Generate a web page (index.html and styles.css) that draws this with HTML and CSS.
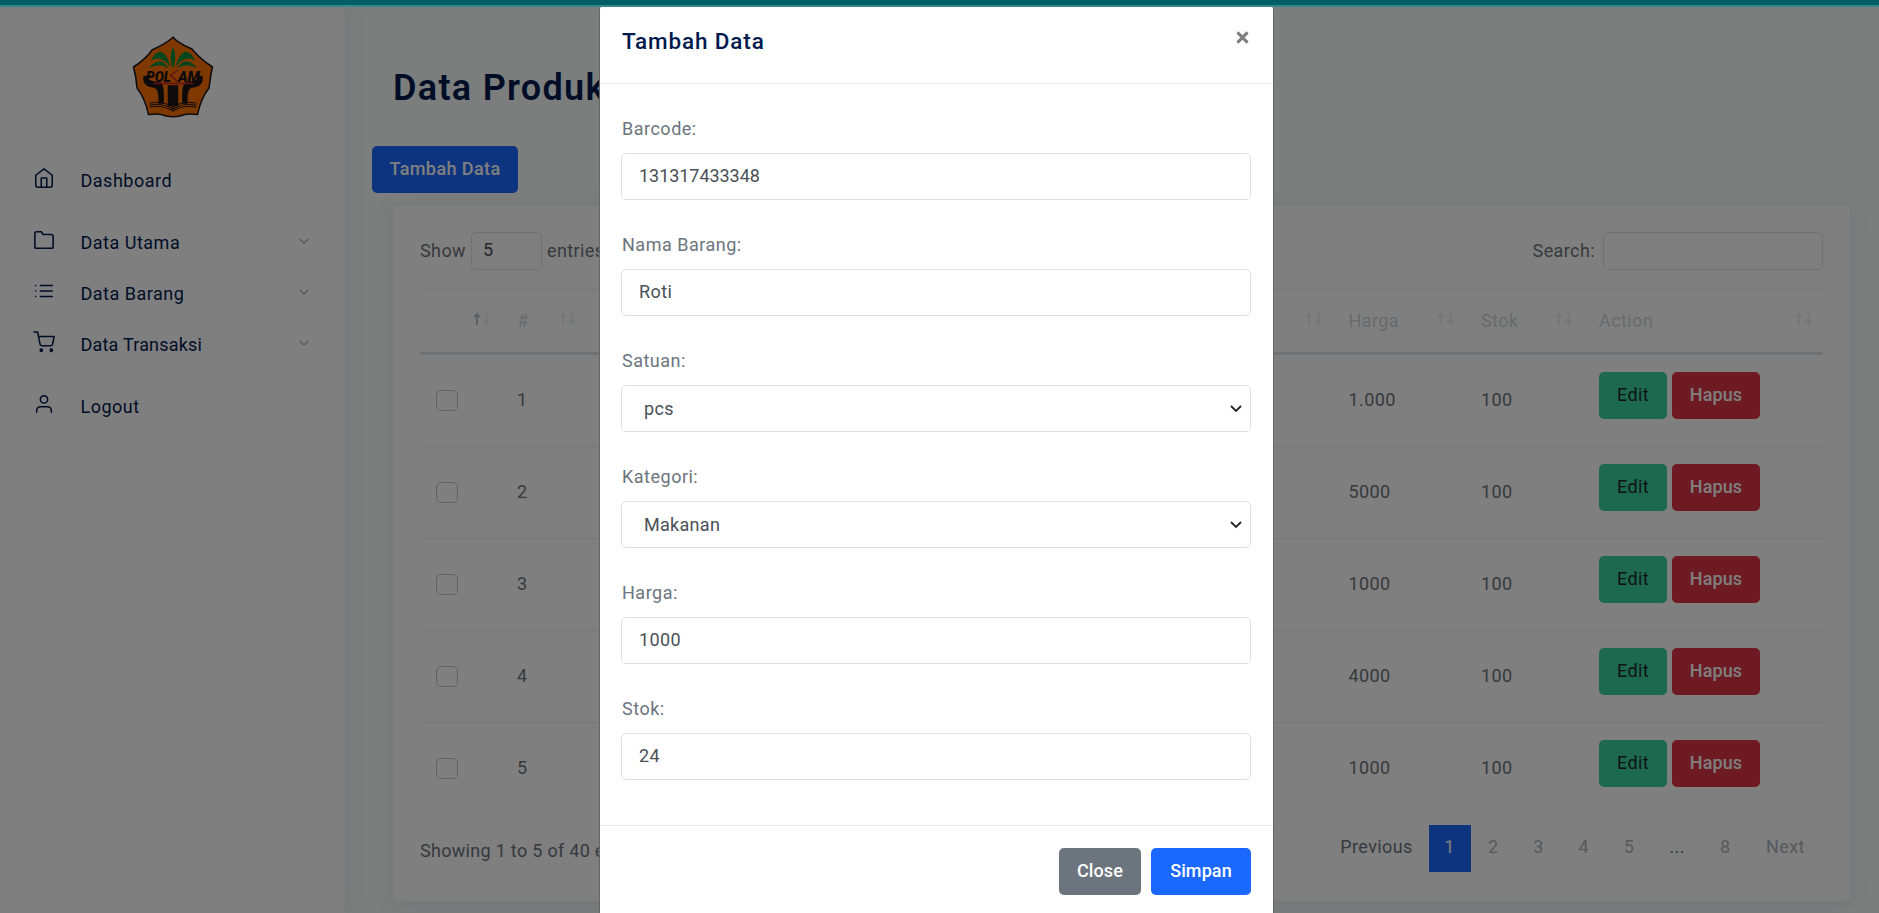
FILE: index.html
```
<!DOCTYPE html>
<html lang="id">
<head>
<meta charset="utf-8">
<title>Data Produk</title>
<link rel="stylesheet" href="styles.css">
</head>
<body>
<svg width="0" height="0" class="defs">
  <symbol id="sort" viewBox="0 0 18 14"><path class="up" d="M4 13V3"/><path class="up head" d="M4 0.500L8 5.200H0z"/><path class="down" d="M13.500 1V10"/><path class="down head" d="M13.500 13.200L17.500 8.500H9.500z"/></symbol>
  <symbol id="chev" viewBox="0 0 10 6"><path d="M.7 .7L5 5L9.300 .7"/></symbol>
</svg>
<div class="app">
  <aside class="sidebar">
    <div class="brand">
      <svg class="logo" viewBox="0 0 82 82">
        <path d="M41 1.200Q46 7 60 13Q68 23 80.500 31Q79 37 77 52Q69 62 65.500 78.500Q54 77 48 80Q41 81.500 34 80Q28 77 16.500 78.500Q13 62 5 52Q4 40 1.500 31Q14 23 20 14Q35 7 41 1.200Z" fill="#ff7200" stroke="#1c1616" stroke-width="1.500"/>
        <path d="M41 11Q45.500 20 41 33Q36.500 20 41 11ZM39 31Q33 14 27 16Q22 17 19 25Q28 18 39 31ZM43 31Q49 14 55 16Q60 17 63 25Q54 18 43 31ZM37 33Q29 18 17 32Q29 26 37 33ZM45 33Q53 18 65 32Q53 26 45 33Z" fill="#058c3b"/>
        <path d="M12 41Q11 50 22 51Q28 52 27 67H31Q32 49 28 47Q16 46 15 42L17 40ZM70 41Q71 50 60 51Q54 52 55 67H51Q50 49 54 47Q66 46 67 42L65 40ZM36.500 50H45.500V69H36.500Z" fill="#1c1418" stroke="#1c1418" stroke-width="1.500"/>
        <path d="M17.500 67Q32 65 41 71Q50 65 64.500 67M17.500 69Q32 67 41 73Q50 67 64.500 69M17.500 71Q32 69 41 75Q50 69 64.500 71" fill="none" stroke="#1c1418" stroke-width="1.200"/>
        <path d="M46 34L38.500 39.500L46 46M21 47.500H61" fill="none" stroke="#c4222b" stroke-width="1.500"/>
        <text class="logo-text" x="14" y="45.500" textLength="25" lengthAdjust="spacingAndGlyphs">POL</text>
        <text class="logo-text" x="46" y="45.500" textLength="22" lengthAdjust="spacingAndGlyphs">AM</text>
      </svg>
    </div>
    <nav>
      <div class="item"><svg class="ico" viewBox="0 0 24 24"><path d="M3 9l9-7 9 7v11a2 2 0 0 1-2 2H5a2 2 0 0 1-2-2z"/><path d="M9 22V12h6v10"/></svg><span>Dashboard</span></div>
      <div class="group">
        <div class="item"><svg class="ico" viewBox="0 0 24 24"><path d="M22 19a2 2 0 0 1-2 2H4a2 2 0 0 1-2-2V5a2 2 0 0 1 2-2h5l2 3h9a2 2 0 0 1 2 2z"/></svg><span>Data Utama</span><svg class="chev"><use href="#chev"/></svg></div>
        <div class="item"><svg class="ico" viewBox="0 0 24 24"><path d="M8 6h13M8 12h13M8 18h13M3 6h.01M3 12h.01M3 18h.01"/></svg><span>Data Barang</span><svg class="chev"><use href="#chev"/></svg></div>
        <div class="item tight"><svg class="ico" viewBox="0 0 24 24"><circle cx="9" cy="21" r="1.200"/><circle cx="20" cy="21" r="1.200"/><path d="M1 1h4l2.680 13.390a2 2 0 0 0 2 1.610h9.720a2 2 0 0 0 2-1.610L23 6H6"/></svg><span>Data Transaksi</span><svg class="chev"><use href="#chev"/></svg></div>
      </div>
      <div class="item"><svg class="ico" viewBox="0 0 24 24"><path d="M20 21v-2a4 4 0 0 0-4-4H8a4 4 0 0 0-4 4v2"/><circle cx="12" cy="7" r="4"/></svg><span>Logout</span></div>
    </nav>
  </aside>
  <main class="main">
    <h1>Data Produk</h1>
    <button class="btn primary add">Tambah Data</button>
    <section class="card">
      <div class="tools">
        <div class="len">Show <span class="box count">5</span> entries</div>
        <div class="find">Search: <span class="box search"></span></div>
      </div>
      <div class="row head">
        <div><svg class="sort asc"><use href="#sort"/></svg></div>
        <div>#<svg class="sort"><use href="#sort"/></svg></div>
        <div><svg class="sort"><use href="#sort"/></svg></div>
        <div>Harga<svg class="sort"><use href="#sort"/></svg></div>
        <div>Stok<svg class="sort"><use href="#sort"/></svg></div>
        <div>Action<svg class="sort"><use href="#sort"/></svg></div>
      </div>
      <div class="row"><div><i class="check"></i></div><div>1</div><div></div><div>1.000</div><div>100</div><div class="acts"><button class="btn success">Edit</button><button class="btn danger">Hapus</button></div></div>
      <div class="row"><div><i class="check"></i></div><div>2</div><div></div><div>5000</div><div>100</div><div class="acts"><button class="btn success">Edit</button><button class="btn danger">Hapus</button></div></div>
      <div class="row"><div><i class="check"></i></div><div>3</div><div></div><div>1000</div><div>100</div><div class="acts"><button class="btn success">Edit</button><button class="btn danger">Hapus</button></div></div>
      <div class="row"><div><i class="check"></i></div><div>4</div><div></div><div>4000</div><div>100</div><div class="acts"><button class="btn success">Edit</button><button class="btn danger">Hapus</button></div></div>
      <div class="row last"><div><i class="check"></i></div><div>5</div><div></div><div>1000</div><div>100</div><div class="acts"><button class="btn success">Edit</button><button class="btn danger">Hapus</button></div></div>
      <div class="foot">
        <div class="info">Showing 1 to 5 of 40 entries</div>
        <div class="pages"><span class="prev">Previous</span><span class="on">1</span><span>2</span><span>3</span><span>4</span><span>5</span><span class="dots">...</span><span>8</span><span class="next">Next</span></div>
      </div>
    </section>
  </main>
</div>
<div class="backdrop">
  <div class="strip"></div>
  <div class="modal">
    <header><h5>Tambah Data</h5><svg class="close" viewBox="0 0 12 12"><path d="M1.300 1.300L10.700 10.700M10.700 1.300L1.300 10.700"/></svg></header>
    <div class="form">
      <label>Barcode:</label><div class="field digits">131317433348</div>
      <label>Nama Barang:</label><div class="field">Roti</div>
      <label>Satuan:</label><div class="field select">pcs<svg viewBox="0 0 12 8"><path d="M1 1L6 6L11 1"/></svg></div>
      <label>Kategori:</label><div class="field select">Makanan<svg viewBox="0 0 12 8"><path d="M1 1L6 6L11 1"/></svg></div>
      <label>Harga:</label><div class="field">1000</div>
      <label>Stok:</label><div class="field">24</div>
    </div>
    <footer><button class="btn secondary">Close</button><button class="btn primary">Simpan</button></footer>
  </div>
</div>
</body>
</html>
```
FILE: styles.css
```
* { box-sizing: border-box; }
html, body { height: 100%; overflow: hidden; }
body { margin: 0; font: 18px/27px Roboto, "Open Sans", sans-serif; color: #6c757d; background: #f8fbfa; letter-spacing: .4px; }
.defs { position: absolute; }
.app { display: flex; height: 913px; }
.sidebar { width: 346px; height: 913px; flex: none; background: #fff; border-right: 1px solid #e9ecef; padding: 35.500px 0 0; box-shadow: 0 0 20px rgba(30,35,90,.06); }
.brand { display: flex; justify-content: center; height: 117px; }
.logo { width: 82px; height: 82px; }
.logo-text { font: italic 900 15px Roboto, sans-serif; fill: #1c1418; letter-spacing: 0; }
.group { margin: 11px 0; }
.item { display: flex; align-items: center; height: 51px; padding: 0 36px 0 32.500px; color: #001a4e; letter-spacing: .5px; }
.item.tight { letter-spacing: .2px; }
.item span { flex: 1; padding: 5px 0 0 26px; }
.ico { width: 22px; height: 22px; fill: none; stroke: #001a4e; stroke-width: 1.700; stroke-linecap: round; stroke-linejoin: round; }
.chev { width: 10px; height: 6px; fill: none; stroke: #adb5bd; stroke-width: 1.400; margin-top: 2px; }
.main { flex: 1; padding: 63px 28px 0 26px; }
h1 { margin: 0 0 33px 21px; font-size: 36px; line-height: 50px; font-weight: 600; color: #001a4e; letter-spacing: 1.300px; }
.btn { display: block; height: 47px; border: 0; border-radius: 5px; padding: 0 0 2px; font: 500 18px/45px Roboto, sans-serif; letter-spacing: .1px; color: #fff; text-align: center; }
.primary { background: #1b68ff; }
.secondary { background: #6c757d; }
.success { background: #3ad29f; color: #212529; width: 68px; font-weight: 400; letter-spacing: .4px; }
.danger { background: #dc3545; width: 88px; }
.add { width: 146px; letter-spacing: .4px; }
.card { margin: 11px 0 0 20px; height: 698px; background: #fff; border: 1px solid #eef0f3; border-radius: 5px; padding: 27px; box-shadow: 0 3px 20px rgba(30,35,90,.07); }
.tools { display: flex; justify-content: space-between; height: 57px; }
.len, .find { display: flex; height: 36px; align-items: center; }
.box { border: 1px solid #dee2e6; border-radius: 5px; height: 38px; line-height: 34px; margin-top: 2px; }
.len .count { width: 71px; margin: 2px 5px 0; padding-left: 11px; color: #495057; }
.find .search { width: 220px; margin-left: 8px; }
.row { display: grid; grid-template-columns: 81px 86px 745.500px 132.500px 118px 1fr; height: 91.900px; border-bottom: 1px solid #e9ecef; }
.row > div { padding: 31px 16px 0; }
.row.head { height: 66px; border-top: 1px solid #e9ecef; border-bottom: 3px solid #dee2e6; color: #ced4da; }
.row.head > div { display: flex; justify-content: space-between; padding: 17px 10px 0 16px; }
.row.last { border: 0; }
.sort { width: 18px; height: 14px; margin: 5px 0 0 auto; stroke-width: 2; color: #ebedee; }
.sort path, #sort path { stroke: currentColor; fill: none; }
#sort .head { fill: currentColor; stroke: none; }
#sort .up { color: var(--up, #ebedee); }
.asc { --up: #b9bdc1; }
.check { display: block; width: 22px; height: 21px; margin-top: 4px; border: 1px solid #bfc5cb; border-radius: 5px; }
.row > .acts { display: flex; gap: 5px; padding-top: 17px; }
.foot { display: flex; justify-content: space-between; padding-top: 10.500px; }
.info { padding-top: 12px; white-space: nowrap; letter-spacing: .3px; }
.pages { display: flex; color: #adb5bd; }
.pages span { width: 45.300px; height: 47px; line-height: 44px; text-align: center; }
.pages .prev { width: 104px; color: #6c757d; }
.pages .on { width: 42px; background: #1b68ff; color: #fff; }
.pages .dots { width: 51px; color: #6c757d; }
.pages .next { width: 75px; }
.backdrop { position: absolute; inset: 0; overflow: hidden; background: rgba(0,0,0,.5); }
.strip { height: 7px; background: #005e64; border-bottom: 2px solid #37868a; }
.modal { width: 675px; height: 930px; margin-left: 599px; background: #fff; border: 1px solid #666; border-top: 0; border-radius: 2px; }
.modal header { display: flex; justify-content: space-between; height: 77px; padding: 17px 24px 0 22px; border-bottom: 1px solid #e9ecef; }
h5 { margin: 0; font-size: 22.500px; line-height: 34px; font-weight: 500; letter-spacing: .85px; color: #001a4e; }
.close { width: 13px; height: 13px; margin-top: 7px; stroke: #7f7f7f; stroke-width: 2.800; fill: none; }
.form { padding: 31px 22px 0 21px; height: 740.500px; }
label { display: block; height: 38px; padding-left: 1px; letter-spacing: .5px; }
.field { height: 47px; margin-bottom: 31.100px; border: 1px solid #dee2e6; border-radius: 5px; padding-left: 17px; line-height: 44px; color: #495057; }
.digits { letter-spacing: -.05px; }
.select { display: flex; align-items: center; justify-content: space-between; padding: 0 8px 0 22px; letter-spacing: .3px; }
.select svg { width: 12px; height: 8px; stroke: #212529; stroke-width: 1.800; fill: none; }
footer { display: flex; justify-content: flex-end; gap: 10px; border-top: 1px solid #e9ecef; padding: 22px 22px 0; }
footer .secondary { width: 82px; }
footer .primary { width: 100px; }
```
